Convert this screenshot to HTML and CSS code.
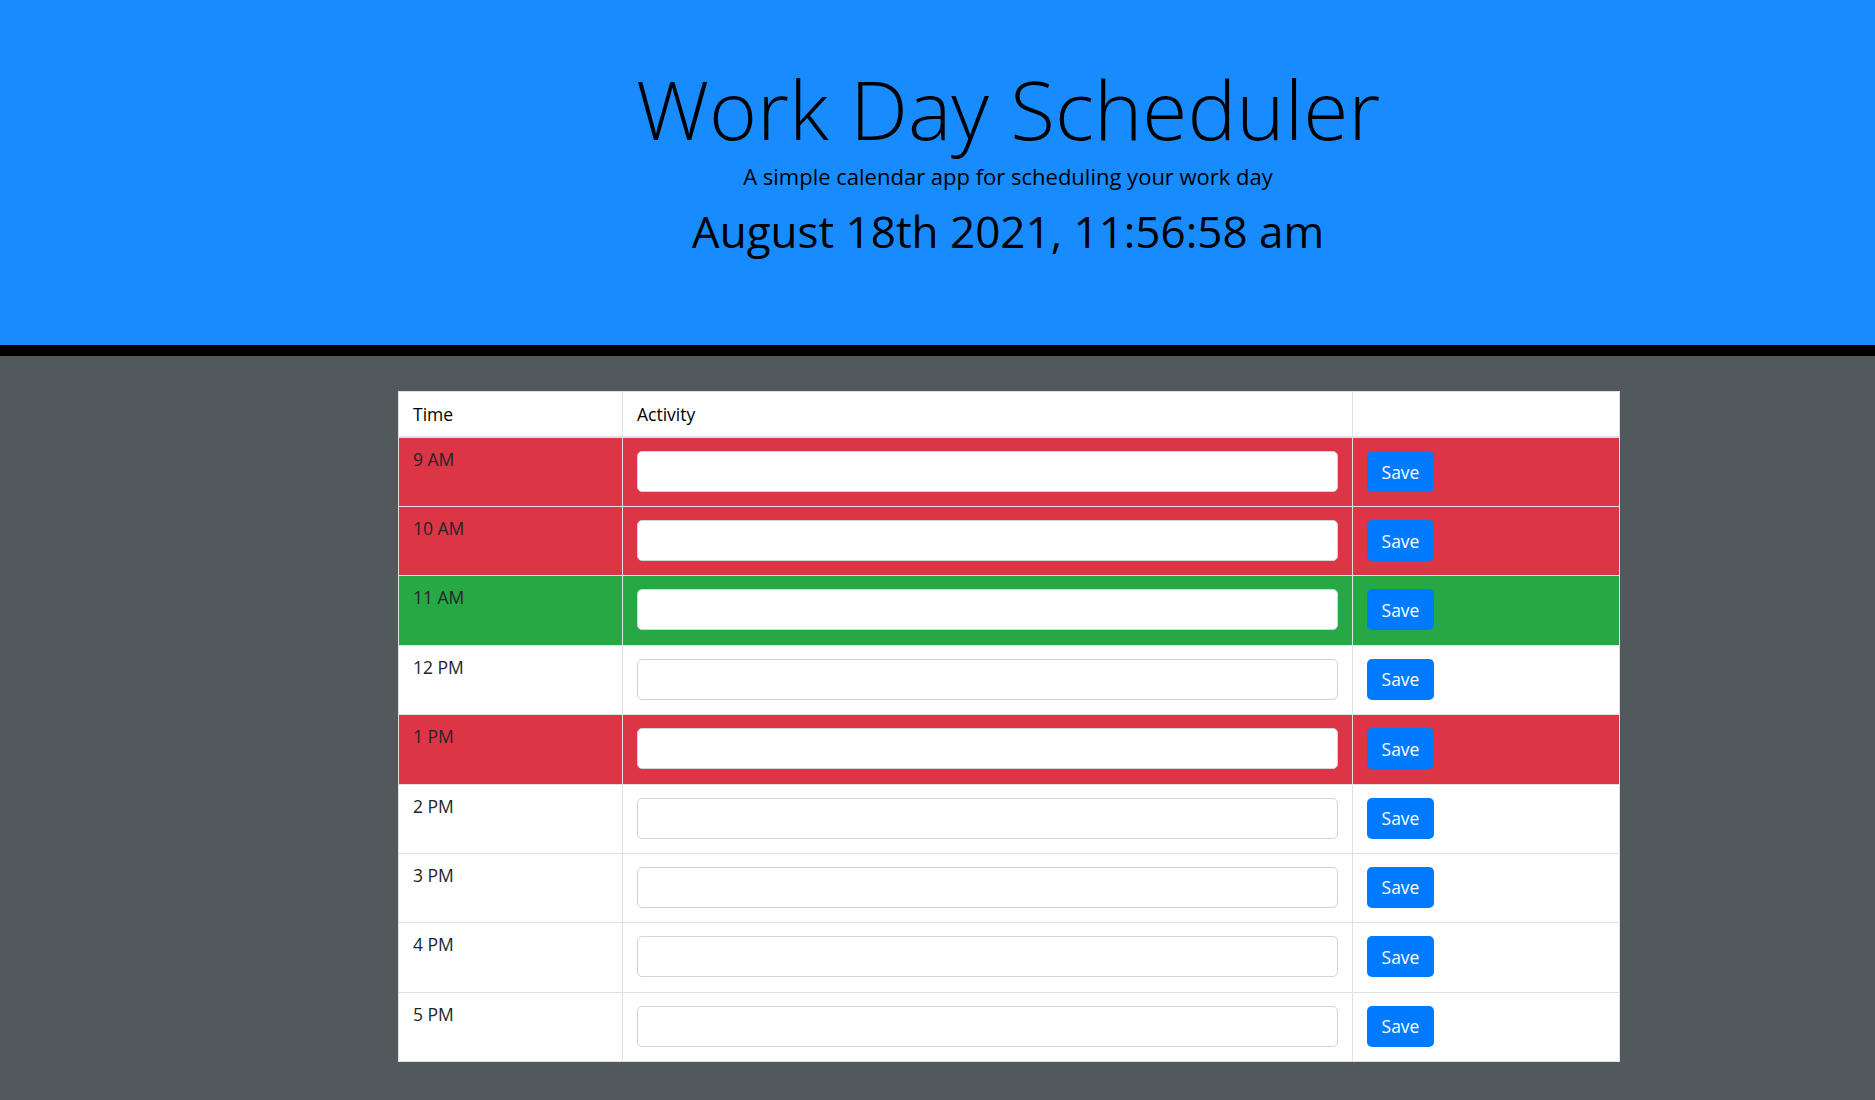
FILE: index.html
```html
<!DOCTYPE html>
<html lang="en">
<head>
<meta charset="utf-8">
<title>Work Day Scheduler</title>
<link rel="stylesheet" href="styles.css">
</head>
<body>
<header class="jumbotron">
  <h1 class="title">Work Day Scheduler</h1>
  <p class="lead">A simple calendar app for scheduling your work day</p>
  <p class="current-day">August 18th 2021, 11:56:58 am</p>
</header>
<main class="container">
  <table class="schedule">
    <colgroup>
      <col class="col-time">
      <col class="col-activity">
      <col class="col-save">
    </colgroup>
    <thead>
      <tr><th>Time</th><th>Activity</th><th></th></tr>
    </thead>
    <tbody>
      <tr class="past"><td class="hour">9 AM</td><td class="activity"><input class="field" type="text"></td><td class="save"><button class="btn">Save</button></td></tr>
      <tr class="past"><td class="hour">10 AM</td><td class="activity"><input class="field" type="text"></td><td class="save"><button class="btn">Save</button></td></tr>
      <tr class="present"><td class="hour">11 AM</td><td class="activity"><input class="field" type="text"></td><td class="save"><button class="btn">Save</button></td></tr>
      <tr class="future"><td class="hour">12 PM</td><td class="activity"><input class="field" type="text"></td><td class="save"><button class="btn">Save</button></td></tr>
      <tr class="past"><td class="hour">1 PM</td><td class="activity"><input class="field" type="text"></td><td class="save"><button class="btn">Save</button></td></tr>
      <tr class="future"><td class="hour">2 PM</td><td class="activity"><input class="field" type="text"></td><td class="save"><button class="btn">Save</button></td></tr>
      <tr class="future"><td class="hour">3 PM</td><td class="activity"><input class="field" type="text"></td><td class="save"><button class="btn">Save</button></td></tr>
      <tr class="future"><td class="hour">4 PM</td><td class="activity"><input class="field" type="text"></td><td class="save"><button class="btn">Save</button></td></tr>
      <tr class="future"><td class="hour">5 PM</td><td class="activity"><input class="field" type="text"></td><td class="save"><button class="btn">Save</button></td></tr>
    </tbody>
  </table>
</main>
</body>
</html>
```
FILE: styles.css
```css
* { box-sizing: border-box; }

html, body {
  margin: 0;
  padding: 0;
  background: #52595c;
  font-family: "Open Sans", "DejaVu Sans", sans-serif;
  color: #212529;
}

.jumbotron {
  height: 356px;
  background: #188bff;
  border-bottom: 11px solid #000;
  padding: 60px 0 0 141px;
  text-align: center;
  color: #000;
}

.title {
  margin: 0;
  font-size: 82px;
  line-height: 97px;
  font-weight: 350;
}

.lead {
  margin: 4px 0 0;
  font-size: 22px;
  line-height: 31.5px;
  font-weight: 400;
}

.current-day {
  margin: 13px 0 0;
  font-size: 44px;
  line-height: 50.4px;
  font-weight: 400;
}

.container {
  padding: 35px 0 40px 398px;
}

.schedule {
  width: 1221px;
  border-collapse: collapse;
  background: #fff;
  table-layout: fixed;
  font-size: 17.5px;
}

.col-time { width: 224px; }
.col-activity { width: 730px; }
.col-save { width: 267px; }

.schedule th,
.schedule td {
  border: 1px solid #dee2e6;
  text-align: left;
  vertical-align: top;
}

.schedule th {
  height: 44px;
  padding: 8px 14px;
  font-weight: 400;
  line-height: 28px;
  border-bottom: 2px solid #dee2e6;
  color: #000;
}

.schedule td {
  height: 69.4px;
  padding: 13px 14px 14px;
}

.schedule td.hour {
  padding-top: 9px;
  line-height: 24px;
}

.past td { background: #dc3545; }
.present td { background: #28a745; }
.future td { background: #fff; }

.field {
  display: block;
  width: 100%;
  height: 41px;
  margin: 0;
  border: 1px solid #ced4da;
  border-radius: 5px;
  background: #fff;
  font-family: inherit;
  font-size: 16px;
}

.btn {
  display: block;
  width: 67px;
  height: 41px;
  margin: 0;
  padding: 0;
  border: none;
  border-radius: 5px;
  background: #007bff;
  color: #fff;
  font-family: inherit;
  font-size: 17.5px;
}
```
